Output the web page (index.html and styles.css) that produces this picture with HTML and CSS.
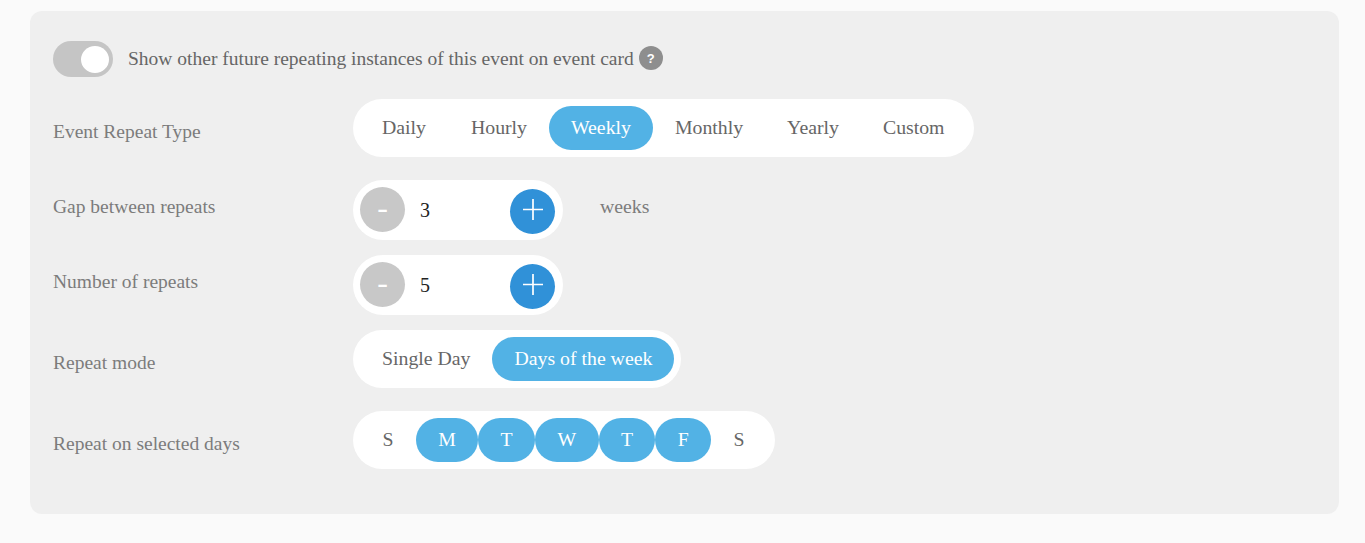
FILE: index.html
```html
<!DOCTYPE html>
<html lang="en">
<head>
<meta charset="utf-8">
<title>Event repeat settings</title>
<link rel="stylesheet" href="styles.css">
</head>
<body>
<main class="panel">
  <div class="toggle-row">
    <span class="toggle"><span class="knob"></span></span>
    <span class="toggle-text">Show other future repeating instances of this event on event card</span>
    <span class="help">?</span>
  </div>
  <div class="row row-type">
    <div class="label label-low">Event Repeat Type</div>
    <div class="pill">
      <span class="opt">Daily</span><span class="opt">Hourly</span><span class="opt on">Weekly</span><span class="opt">Monthly</span><span class="opt">Yearly</span><span class="opt">Custom</span>
    </div>
  </div>
  <div class="row row-gap">
    <div class="label label-high">Gap between repeats</div>
    <div class="stepper">
      <span class="btn minus">-</span><span class="value">3</span>
      <span class="btn plus"><svg width="20" height="21" viewBox="0 0 20 21"><path d="M10 0V21M0 10.5H20" stroke="#fff" stroke-width="1.7" fill="none"/></svg></span>
    </div>
    <div class="unit">weeks</div>
  </div>
  <div class="row row-num">
    <div class="label label-high">Number of repeats</div>
    <div class="stepper">
      <span class="btn minus">-</span><span class="value">5</span>
      <span class="btn plus"><svg width="20" height="21" viewBox="0 0 20 21"><path d="M10 0V21M0 10.5H20" stroke="#fff" stroke-width="1.7" fill="none"/></svg></span>
    </div>
  </div>
  <div class="row row-mode">
    <div class="label label-low">Repeat mode</div>
    <div class="pill">
      <span class="opt">Single Day</span><span class="opt on">Days of the week</span>
    </div>
  </div>
  <div class="row row-days">
    <div class="label label-low">Repeat on selected days</div>
    <div class="pill">
      <span class="opt day">S</span><span class="opt day on">M</span><span class="opt day on">T</span><span class="opt day on">W</span><span class="opt day on">T</span><span class="opt day on">F</span><span class="opt day">S</span>
    </div>
  </div>
</main>
</body>
</html>
```
FILE: styles.css
```css
html, body { margin: 0; padding: 0; }
body {
  background: #fafafa;
  font-family: "Liberation Serif", "Times New Roman", serif;
  font-size: 19.5px;
  height: 543px;
  overflow: hidden;
  padding: 11px 26px 0 30px;
  box-sizing: border-box;
}
.panel {
  background: #efefef;
  border-radius: 12px;
  height: 503px;
  box-sizing: border-box;
  padding: 30px 23px 0;
}
.toggle-row { display: flex; align-items: center; height: 36px; }
.toggle {
  width: 60px; height: 36px; border-radius: 18px; background: #c5c5c5;
  display: flex; align-items: center; justify-content: flex-end;
  padding-right: 4px; box-sizing: border-box;
}
.knob { width: 28px; height: 27px; border-radius: 50%; background: #fff; }
.toggle-text { margin-left: 15px; color: #666; line-height: 36px; }
.help {
  width: 24px; height: 24px; border-radius: 50%; background: #8e8e8e; color: #fff;
  margin-left: 5px; margin-bottom: 2px; display: flex; align-items: center; justify-content: center;
  font-family: "Liberation Sans", Arial, sans-serif; font-size: 13px; font-weight: 700;
}
.row { display: flex; align-items: center; }
.row-type { margin-top: 22px; }
.row-gap { margin-top: 23px; }
.row-num { margin-top: 15px; }
.row-mode { margin-top: 15px; }
.row-days { margin-top: 23px; }
.label { width: 300px; flex: none; color: #7c7c7c; line-height: 24px; }
.label-low { padding-top: 8px; }
.label-high { padding-bottom: 6px; }
.pill {
  display: flex; background: #fff; border-radius: 29px; padding: 7px 8px 7px 7px; font-size: 19.8px;
}
.row-type .pill, .row-mode .pill { padding-right: 7px; }
.row-type .opt:first-child { padding-right: 23px; }
.opt {
  height: 44px; line-height: 43px; padding: 0 22px; border-radius: 22px; color: #666; white-space: nowrap;
}
.opt.on { background: #52b2e5; color: #fff; }
.opt.day { padding: 0 22.4px; }
.stepper {
  display: flex; align-items: center; width: 210px; height: 60px; box-sizing: border-box;
  background: #fff; border-radius: 30px; padding: 0 8px 0 7px; font-size: 20px;
}
.btn {
  width: 45px; height: 45px; border-radius: 50%; flex: none;
  display: flex; align-items: center; justify-content: center; color: #fff;
}
.minus { background: #c8c8c8; font-size: 32px; margin-bottom: 2px; padding-bottom: 4px; box-sizing: border-box; }
.plus { background: #3091d8; margin-left: auto; margin-top: 2px; padding-bottom: 4px; box-sizing: border-box; }
.value { margin-left: 15px; color: #222; }
.unit { margin-left: 37px; color: #7c7c7c; padding-bottom: 8px; font-size: 19.8px; }
```
